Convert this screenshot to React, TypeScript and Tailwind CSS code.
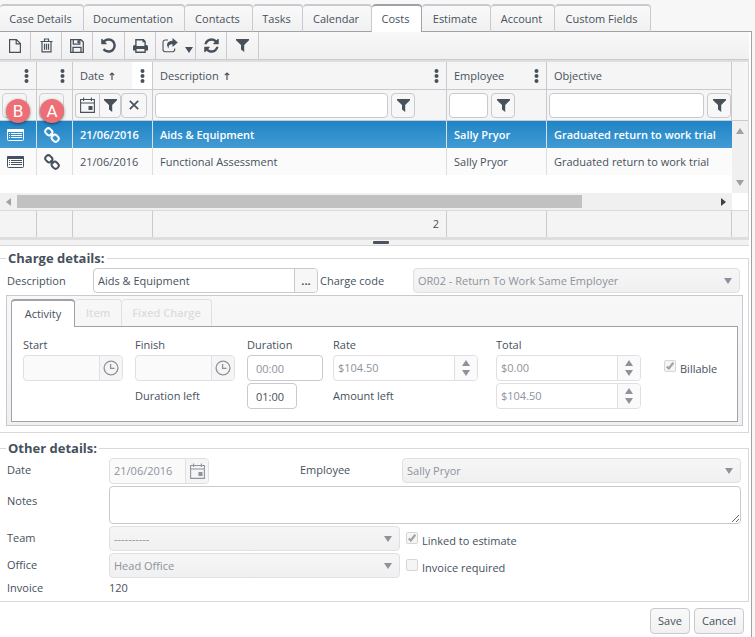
import React from "react";

const TABS = [
  { label: "Case Details", width: "w-[84px]" },
  { label: "Documentation", width: "w-[101px]" },
  { label: "Contacts", width: "w-[68px]" },
  { label: "Tasks", width: "w-[50px]" },
  { label: "Calendar", width: "w-[69px]" },
  { label: "Costs", width: "w-[50px]" },
  { label: "Estimate", width: "w-[69px]" },
  { label: "Account", width: "w-[64px]" },
  { label: "Custom Fields", width: "w-[96px]" },
];

const ROWS = [
  { date: "21/06/2016", description: "Aids & Equipment", employee: "Sally Pryor", objective: "Graduated return to work trial", selected: true },
  { date: "21/06/2016", description: "Functional Assessment", employee: "Sally Pryor", objective: "Graduated return to work trial", selected: false },
];

// Icons

const FileIcon = () => (
  <svg width="12" height="14" viewBox="0 0 12 14" fill="none" stroke="currentColor" strokeWidth="1.2">
    <path d="M.6.6h6.8l4 4v8.8H.6zM7.2.8v4h4" />
  </svg>
);

const TrashIcon = () => (
  <svg width="13" height="15" viewBox="0 0 13 15" fill="none" stroke="currentColor" strokeWidth="1.2">
    <path d="M.5 3.5h12M4.5 3.3V1h4v2.3M2 3.8v10.1h9V3.8M4.5 5.8v6M6.5 5.8v6M8.5 5.8v6" />
  </svg>
);

const SaveIcon = () => (
  <svg width="14" height="14" viewBox="0 0 14 14" fill="none" stroke="currentColor" strokeWidth="1.3">
    <path d="M.7.7h10.2l2.4 2.4v10.2H.7zM3.3.8v4.4h6.5V.8M3 13V8.3h8V13" />
    <path d="M7.4 1.2h1.8v3H7.4z" fill="currentColor" stroke="none" />
  </svg>
);

const UndoIcon = () => (
  <svg width="17" height="17" viewBox="0 0 1792 1792" fill="currentColor">
    <path d="M1664 896q0 156-61 298t-164 245-245 164-298 61q-172 0-327-72.5t-264-204.5q-7-10-6.5-22.5t8.5-20.5l137-138q10-9 25-9 16 2 23 12 73 95 179 147t225 52q104 0 198.5-40.5t163.5-109.5 109.5-163.5 40.5-198.5-40.5-198.5-109.5-163.5-163.5-109.5-198.5-40.5q-98 0-188 35.5t-160 101.5l137 138q31 30 14 69-17 40-59 40h-448q-26 0-45-19t-19-45v-448q0-42 40-59 39-17 69 14l130 129q107-101 244.5-156.5t284.5-55.5q156 0 298 61t245 164 164 245 61 298z" />
  </svg>
);

const PrintIcon = () => (
  <svg width="15" height="14" viewBox="0 0 15 14" fill="currentColor">
    <path d="M2.2 0h8.4l2.2 2.2V6h.7A1.5 1.5 0 0 1 15 7.5v4h-2.2V14H2.2v-2.5H0v-4A1.5 1.5 0 0 1 1.5 6h.7zM3.6 1.4V7h7.8V3.3H9.5V1.4zM3.6 9.9v2.7h7.8V9.9z" fillRule="evenodd" />
  </svg>
);

const ShareIcon = () => (
  <svg width="16" height="15" viewBox="0 0 16 15">
    <path d="M6 2H3.2A2.2 2.2 0 0 0 1 4.2v7.3a2.2 2.2 0 0 0 2.2 2.2h7.3a2.2 2.2 0 0 0 2.2-2.2v-1" fill="none" stroke="currentColor" strokeWidth="1.1" />
    <path d="M10.5 0 15.8 4.5 10.5 9V6.2C7.5 6.2 6.3 7.2 6.8 10.7 3.2 6.5 5.5 2.8 10.5 2.8z" fill="currentColor" />
  </svg>
);

const RefreshIcon = () => (
  <svg width="17" height="17" viewBox="0 0 1792 1792" fill="currentColor">
    <path d="M1639 1056q0 5-1 7-64 268-268 434.5t-478 166.5q-146 0-282.5-55t-243.5-157l-129 129q-19 19-45 19t-45-19-19-45v-448q0-26 19-45t45-19h448q26 0 45 19t19 45-19 45l-137 137q71 66 161 102t187 36q134 0 250-65t186-179q11-17 53-117 8-23 30-23h192q13 0 22.5 9.5t9.5 22.5zm25-800v448q0 26-19 45t-45 19h-448q-26 0-45-19t-19-45 19-45l138-138q-148-137-349-137-134 0-250 65t-186 179q-11 17-53 117-8 23-30 23h-199q-13 0-22.5-9.5t-9.5-22.5v-7q65-268 270-434.5t480-166.5q146 0 284 55.5t245 156.5l130-129q19-19 45-19t45 19 19 45z" />
  </svg>
);

const FilterIcon = () => (
  <svg width="13" height="13" viewBox="0 0 13 13" fill="currentColor">
    <path d="M0 0h13v1.2L8.2 6v7L5 10.6V6L0 1.2z" />
  </svg>
);

const CalendarIcon = () => (
  <svg width="15" height="16" viewBox="0 0 15 16" fill="none" stroke="currentColor" strokeWidth="1.1">
    <path d="M.6 2.5h13.8v12.9H.6zM.6 6h13.8M3.6.5v3.5M11.4.5v3.5" />
    <path d="M8.5 9h4v4h-4z" fill="currentColor" stroke="none" />
  </svg>
);

const ClockIcon = () => (
  <svg width="16" height="16" viewBox="0 0 16 16" fill="none" stroke="currentColor" strokeWidth="1.3">
    <circle cx="8" cy="8" r="6.9" />
    <path d="M7.6 4v4.4h4" />
  </svg>
);

const CloseIcon = () => (
  <svg width="10" height="10" viewBox="0 0 10 10" stroke="currentColor" strokeWidth="1.7">
    <path d="M.8.8l8.4 8.4M9.2.8.8 9.2" />
  </svg>
);

const DotsIcon = () => (
  <svg width="5" height="14" viewBox="0 0 5 14" fill="currentColor">
    <circle cx="2.5" cy="2" r="2" />
    <circle cx="2.5" cy="7" r="2" />
    <circle cx="2.5" cy="12" r="2" />
  </svg>
);

const SortIcon = () => (
  <svg width="6" height="8" viewBox="0 0 6 8" fill="none" stroke="currentColor" strokeWidth="1.2">
    <path d="M3 8V1M.8 3.2 3 1l2.2 2.200" />
  </svg>
);

const ListIcon = () => (
  <svg width="17" height="12" viewBox="0 0 17 12">
    <rect x=".5" y=".5" width="16" height="11" rx="1" fill="none" stroke="currentColor" />
    <path d="M0 1a1 1 0 0 1 1-1h15a1 1 0 0 1 1 1v2H0zM2 4h1v1H2zM4 4h11v1H4zM2 6h1v1H2zM4 6h11v1H4zM2 8h1v1H2zM4 8h11v1H4z" fill="currentColor" />
  </svg>
);

const LinkIcon = () => (
  <svg width="16" height="16" viewBox="0 0 16 16" fill="none" stroke="currentColor" strokeWidth="2">
    <rect x="1.200" y="1.800" width="7.200" height="6" rx="2.800" transform="rotate(45 4.800 4.800)" />
    <rect x="7.600" y="8.200" width="7.200" height="6" rx="2.800" transform="rotate(45 11.200 11.200)" />
    <path d="M6.500 6.500l3 3" strokeWidth="1.500" />
  </svg>
);

const CaretDown = () => (
  <svg width="8" height="6" viewBox="0 0 8 6" fill="currentColor">
    <path d="M0 0h8L4 6z" />
  </svg>
);

const CaretUp = () => (
  <svg width="8" height="6" viewBox="0 0 8 6" fill="currentColor">
    <path d="M0 6h8L4 0z" />
  </svg>
);

// Form controls

const SelectBox = ({ id, value }: { id: string; value: string }) => (
  <div className="relative w-full">
    <select
      id={id}
      disabled
      className="block h-[25px] w-full appearance-none rounded-[4px] border border-[#e0e0e3] bg-linear-to-b from-[#f6f6f6] to-[#f0f0f0] pl-1 text-[#8d929c] opacity-100"
    >
      <option>{value}</option>
    </select>
    <span className="pointer-events-none absolute top-[10px] right-[8px] text-[#8d929c]">
      <CaretDown />
    </span>
  </div>
);

const PickerBox = ({ id, value, children }: { id: string; value?: string; children: React.ReactNode }) => (
  <div className="flex h-[26px] w-[100px] overflow-hidden rounded-[4px] border border-[#e0e0e3] bg-[#fafafa] text-[#8d929c]">
    <input id={id} type="text" disabled defaultValue={value} className="w-0 flex-1 pl-1" />
    <button type="button" disabled aria-label="Open picker" className="flex w-[23px] items-center justify-center border-l border-[#e0e0e3] bg-[#f5f5f5]">
      {children}
    </button>
  </div>
);

const SpinBox = ({ id, value }: { id: string; value: string }) => (
  <div className="flex h-[26px] w-[145px] overflow-hidden rounded-[4px] border border-[#e0e0e3] bg-white text-[#8d929c]">
    <input id={id} type="text" disabled defaultValue={value} className="w-0 flex-1 pl-1" />
    <div className="flex w-[23px] flex-col items-center justify-center gap-1 border-l border-[#e0e0e3] bg-[#fafafa]">
      <button type="button" disabled aria-label="Increase"><CaretUp /></button>
      <button type="button" disabled aria-label="Decrease"><CaretDown /></button>
    </div>
  </div>
);

const CheckBox = ({ id, label, checked }: { id: string; label: string; checked?: boolean }) => (
  <div className="flex gap-1">
    <span className="relative block size-3">
      <input
        id={id}
        type="checkbox"
        disabled
        defaultChecked={checked}
        className="block size-3 appearance-none rounded-[2px] border border-[#d6d6da] bg-[#f5f5f5]"
      />
      {checked && (
        <svg width="8" height="8" viewBox="0 0 8 8" className="absolute top-[2px] left-[2px] text-[#a3a3a3]" fill="none" stroke="currentColor" strokeWidth="2.2">
          <path d="M.7 4.5 2.8 6.5 7.3.8" />
        </svg>
      )}
    </span>
    <label htmlFor={id} className="pt-px leading-4">{label}</label>
  </div>
);

const FilterButton = ({ className = "w-6 rounded-[4px]" }: { className?: string }) => (
  <button type="button" aria-label="Filter" className={`flex h-[25px] shrink-0 items-center justify-center border border-[#c9c9cf] bg-[#f7f7f7] ${className}`}>
    <FilterIcon />
  </button>
);

const Badge = ({ className, children }: { className: string; children: React.ReactNode }) => (
  <span className={`absolute top-[6px] flex size-6 items-center justify-center rounded-full bg-[#ee6e76] font-[Roboto] text-[17px] text-white shadow-[0_1px_3px_#00000080] ${className}`}>
    {children}
  </span>
);

const ToolButton = ({ label, width = "w-[31px]", children }: { label: string; width?: string; children: React.ReactNode }) => (
  <button type="button" aria-label={label} className={`flex items-center justify-center border-r border-[#c9c9cf] ${width}`}>
    {children}
  </button>
);

const headCell = "border-r border-b border-[#c9c9cf] p-0 text-left font-normal";
const bodyCell = "border-r border-[#dedee1] p-0 pl-[7px]";

const HeadLabel = ({ text, sorted, menu = true, highlight }: { text: string; sorted?: boolean; menu?: boolean; highlight?: boolean }) => (
  <div className="flex h-[27px] items-center pl-[7px]">
    {text}
    {sorted && <span className="pl-[5px]"><SortIcon /></span>}
    {menu && (
      <button type="button" aria-label="Column menu" className={`ml-auto flex h-full w-5 items-center justify-center ${highlight ? "bg-white" : ""}`}>
        <DotsIcon />
      </button>
    )}
  </div>
);

const CostsGrid = () => (
  <div className="border-r border-[#d9d9dc]">
    <div className="flex items-start">
      <table className="w-0 flex-1 table-fixed border-separate border-spacing-0">
        <colgroup>
          <col className="w-[37px]" />
          <col className="w-[36px]" />
          <col className="w-[80px]" />
          <col className="w-[294px]" />
          <col className="w-[100px]" />
          <col />
        </colgroup>
        <thead className="bg-[#f5f5f5]">
          <tr>
            <th className={headCell}><HeadLabel text="" /></th>
            <th className={headCell}><HeadLabel text="" /></th>
            <th className={headCell}><HeadLabel text="Date" sorted highlight /></th>
            <th className={headCell}><HeadLabel text="Description" sorted /></th>
            <th className={headCell}><HeadLabel text="Employee" /></th>
            <th className={headCell}><HeadLabel text="Objective" menu={false} /></th>
          </tr>
          <tr className="h-[31px]">
            <td className={headCell}>
              <div className="relative pl-[2px]">
                <input aria-label="Filter first column" className="block h-[25px] w-[25px] rounded-[4px] border border-[#d0d0d5]" />
                <Badge className="left-[6px]">B</Badge>
              </div>
            </td>
            <td className={headCell}>
              <div className="relative pl-[2px]">
                <input aria-label="Filter second column" className="block h-[25px] w-[25px] rounded-[4px] border border-[#d0d0d5]" />
                <Badge className="left-[3px]">A</Badge>
              </div>
            </td>
            <td className={headCell}>
              <div className="flex pl-[2px]">
                <button type="button" aria-label="Pick date" className="flex h-[25px] w-6 items-center justify-center rounded-l-[4px] border border-r-0 border-[#c9c9cf] bg-[#f7f7f7]">
                  <CalendarIcon />
                </button>
                <FilterButton className="w-[22px] rounded-r-[4px]" />
                <button type="button" aria-label="Clear filter" className="flex h-[25px] w-[26px] items-center justify-center rounded-[4px] border border-[#c9c9cf] bg-[#f7f7f7]">
                  <CloseIcon />
                </button>
              </div>
            </td>
            <td className={headCell}>
              <div className="flex gap-[3px] pr-[31px] pl-[2px]">
                <input aria-label="Filter description" className="h-[25px] w-0 flex-1 rounded-[4px] border border-[#c9c9cf] bg-white" />
                <FilterButton />
              </div>
            </td>
            <td className={headCell}>
              <div className="flex gap-[3px] pr-[31px] pl-[2px]">
                <input aria-label="Filter employee" className="h-[25px] w-0 flex-1 rounded-[4px] border border-[#c9c9cf] bg-white" />
                <FilterButton />
              </div>
            </td>
            <td className={headCell}>
              <div className="flex gap-[3px] pl-[2px]">
                <input aria-label="Filter objective" className="h-[25px] w-0 flex-1 rounded-[4px] border border-[#c9c9cf] bg-white" />
                <FilterButton />
              </div>
            </td>
          </tr>
        </thead>
        <tbody>
          {ROWS.map((row) => (
            <tr
              key={row.description}
              className={`h-[27px] ${row.selected ? "bg-linear-to-b from-[#1c84c6] to-[#429bd3] font-semibold text-white" : "bg-[#fbfbfb]"}`}
            >
              <td className={bodyCell}><ListIcon /></td>
              <td className={bodyCell}><LinkIcon /></td>
              <td className={bodyCell}>{row.date}</td>
              <td className={bodyCell}>{row.description}</td>
              <td className={bodyCell}>{row.employee}</td>
              <td className="p-0 pl-[7px] whitespace-nowrap">{row.objective}</td>
            </tr>
          ))}
        </tbody>
      </table>
      <div className="flex w-4 flex-col">
        <div className="h-[59px] border-b border-[#c9c9cf] bg-[#f5f5f5]" />
        <div className="flex h-[72px] flex-col items-center justify-between bg-[#f0f0f0] py-[7px] text-[#a0a0a4]">
          <CaretUp />
          <CaretDown />
        </div>
      </div>
    </div>

    {/* horizontal scrollbar */}
    <div className="mr-4 flex h-[17px] items-center bg-[#f0f0f0] px-[6px]">
      <svg width="5" height="8" viewBox="0 0 5 8" className="text-[#a0a0a4]" fill="currentColor"><path d="M5 0v8L0 4z" /></svg>
      <div className="mx-[6px] flex-1">
        <div className="h-[13px] w-[81%] bg-[#c1c1c1]" />
      </div>
      <svg width="5" height="8" viewBox="0 0 5 8" className="text-[#404040]" fill="currentColor"><path d="M0 0v8l5-4z" /></svg>
    </div>

    <div className="grid h-[27px] grid-cols-[37px_36px_80px_294px_100px_1fr_16px] border-t border-[#d9d9dc] bg-[#f4f4f4]">
      <div className="border-r border-[#c9c9cf]" />
      <div className="border-r border-[#c9c9cf]" />
      <div className="border-r border-[#c9c9cf]" />
      <div className="border-r border-[#c9c9cf] pt-[5px] pr-[7px] text-right">2</div>
      <div className="border-r border-[#c9c9cf]" />
      <div className="border-r border-[#c9c9cf]" />
      <div />
    </div>
  </div>
);

const ChargeDetails = () => (
  <fieldset className="border border-l-0 border-[#d9d9dc] pb-[6px]">
    <legend className="ml-[6px] h-5 px-[2px] text-[13px] leading-5 font-bold">Charge details:</legend>
    <div className="flex items-center pr-2 pl-[7px]">
      <label htmlFor="charge-description" className="w-[86px] shrink-0">Description</label>
      <div className="flex h-[25px] w-[225px] shrink-0 overflow-hidden rounded-[4px] border border-[#c9c9cf]">
        <input id="charge-description" type="text" defaultValue="Aids & Equipment" className="w-0 flex-1 pl-1" />
        <button type="button" className="w-[23px] border-l border-[#c9c9cf] bg-[#f7f7f7] font-bold">...</button>
      </div>
      <label htmlFor="charge-code" className="w-[95px] shrink-0 pl-[2px]">Charge code</label>
      <SelectBox id="charge-code" value="OR02 - Return To Work Same Employer" />
    </div>

    <div className="mt-[2px] mr-[5px] ml-[6px] border border-[#c9c9cf] bg-linear-to-b from-[#f8f8f8] to-[#f0f0f0] px-1 py-[3px]">
      <div className="flex">
        <button type="button" className="relative -mb-px h-7 w-16 rounded-t-[4px] border border-b-0 border-t-2 border-[#a0a1a9] bg-white">Activity</button>
        <button type="button" disabled className="h-[27px] w-[47px] rounded-t-[4px] border border-b-0 border-l-0 border-[#e0e0e3] font-semibold text-[#dcdcdf]">Item</button>
        <button type="button" disabled className="h-[27px] w-[90px] rounded-t-[4px] border border-b-0 border-l-0 border-[#e0e0e3] font-semibold text-[#dcdcdf]">Fixed Charge</button>
      </div>
      <div className="grid grid-cols-[112px_112px_86px_163px_168px_1fr] items-center gap-y-[2px] border border-[#a0a1a9] bg-white pt-[10px] pb-3 pl-[11px]">
        <label htmlFor="start">Start</label>
        <label htmlFor="finish">Finish</label>
        <label htmlFor="duration">Duration</label>
        <label htmlFor="rate">Rate</label>
        <label htmlFor="total" className="col-span-2">Total</label>

        <PickerBox id="start"><ClockIcon /></PickerBox>
        <PickerBox id="finish"><ClockIcon /></PickerBox>
        <input id="duration" type="text" defaultValue="00:00" className="h-[26px] w-[76px] rounded-[4px] border border-[#c9c9cf] pl-2 text-[#8d929c]" />
        <SpinBox id="rate" value="$104.50" />
        <SpinBox id="total" value="$0.00" />
        <CheckBox id="billable" label="Billable" checked />

        <label htmlFor="duration-left" className="col-start-2">Duration left</label>
        <input id="duration-left" type="text" defaultValue="01:00" className="h-[26px] w-[50px] rounded-[4px] border border-[#c9c9cf] pl-2" />
        <label htmlFor="amount-left">Amount left</label>
        <SpinBox id="amount-left" value="$104.50" />
      </div>
    </div>
  </fieldset>
);

const OtherDetails = () => (
  <fieldset className="mt-[5px] border border-l-0 border-[#d9d9dc] pb-[5px]">
    <legend className="ml-[6px] h-5 px-[2px] text-[13px] leading-5 font-bold">Other details:</legend>
    <div className="grid grid-cols-[102px_191px_102px_1fr] gap-y-[2px] pr-[7px] pl-[7px]">
      <label htmlFor="other-date" className="pt-1">Date</label>
      <PickerBox id="other-date" value="21/06/2016"><CalendarIcon /></PickerBox>
      <label htmlFor="other-employee" className="pt-1">Employee</label>
      <SelectBox id="other-employee" value="Sally Pryor" />

      <label htmlFor="notes" className="pt-[7px]">Notes</label>
      <textarea id="notes" className="col-span-3 block h-[38px] w-full resize-y rounded-[4px] border border-[#c9c9cf] bg-white" />

      <label htmlFor="team" className="pt-1">Team</label>
      <div className="col-span-3 flex gap-[6px]">
        <div className="w-[291px]"><SelectBox id="team" value="----------" /></div>
        <div className="pt-[6px]"><CheckBox id="linked" label="Linked to estimate" checked /></div>
      </div>

      <label htmlFor="office" className="pt-1">Office</label>
      <div className="col-span-3 flex gap-[6px]">
        <div className="w-[291px]"><SelectBox id="office" value="Head Office" /></div>
        <div className="pt-[6px]"><CheckBox id="invoice-required" label="Invoice required" /></div>
      </div>

      <span>Invoice</span>
      <span>120</span>
    </div>
  </fieldset>
);

const App = () => {
  return (
    <div className="flex min-h-screen flex-col bg-[#f7f7f7] pt-1 font-['Open_Sans','Liberation_Sans',sans-serif] text-[11px] leading-4 text-[#46515c]">
      <nav className="flex">
        {TABS.map((tab) => (
          <a
            key={tab.label}
            href="#"
            className={`relative -mb-px flex h-7 items-center justify-center rounded-t-[4px] border-t-2 border-r pr-[2px] ${tab.width} ${
              tab.label === "Costs"
                ? "z-10 border-[#a0a1a9] bg-white"
                : "border-b border-r-[#c9c9cf] border-t-[#c9c9cf] border-b-[#a0a1a9] bg-linear-to-b from-[#f9f9f9] to-[#f1f1f1]"
            }`}
          >
            {tab.label}
          </a>
        ))}
      </nav>

      <main className="mr-[3px] flex-1 border-t border-r border-[#a0a1a9] bg-white pr-[2px]">
        <div className="flex h-7 border-b border-[#c9c9cf] bg-linear-to-b from-[#f8f8f8] to-[#f0f0f0]">
          <ToolButton label="New"><FileIcon /></ToolButton>
          <ToolButton label="Delete"><TrashIcon /></ToolButton>
          <ToolButton label="Save record"><SaveIcon /></ToolButton>
          <ToolButton label="Undo" width="w-8"><UndoIcon /></ToolButton>
          <ToolButton label="Print"><PrintIcon /></ToolButton>
          <ToolButton label="Share" width="w-10">
            <span className="flex items-end gap-[7px] pl-1"><ShareIcon /><CaretDown /></span>
          </ToolButton>
          <ToolButton label="Refresh"><RefreshIcon /></ToolButton>
          <ToolButton label="Filter records" width="w-8"><FilterIcon /></ToolButton>
        </div>
        <div className="h-[2px] bg-[#dedede]" />

        <CostsGrid />

        {/* splitter between the grid and the form */}
        <div className="mb-[2px] flex h-[9px] items-center justify-center border-t-3 border-b border-t-[#dedede] border-b-[#d9d9dc] bg-[#f2f2f2] pl-3">
          <div className="h-[3px] w-4 rounded-[1px] bg-[#4a5560]" />
        </div>

        <ChargeDetails />
        <OtherDetails />

        <div className="flex justify-end gap-1 pt-[6px] pr-[5px] pb-[3px]">
          <button type="button" className="h-[26px] w-10 rounded-[4px] border border-[#c9c9cf] bg-linear-to-b from-[#f9f9f9] to-[#f1f1f1]">Save</button>
          <button type="button" className="h-[26px] w-[50px] rounded-[4px] border border-[#c9c9cf] bg-linear-to-b from-[#f9f9f9] to-[#f1f1f1]">Cancel</button>
        </div>
      </main>
    </div>
  );
};

export default App;
